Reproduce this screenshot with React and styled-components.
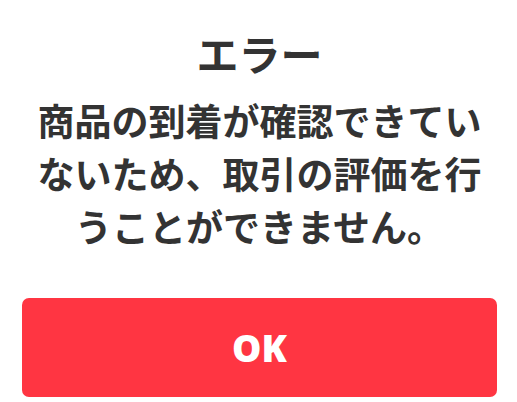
import React from 'react';
import styled, { createGlobalStyle } from 'styled-components';

const GlobalStyle = createGlobalStyle`
  html, body {
    margin: 0;
    padding: 0;
    background: #fff;
  }
  body {
    font-family: "Noto Sans CJK JP", "Noto Sans", sans-serif;
    color: #333;
  }
`;

const Dialog = styled.div`
  width: 517px;
  height: 402px;
  box-sizing: border-box;
  padding: 27px 20px 0 22px;
  display: flex;
  flex-direction: column;
  align-items: stretch;
`;

const Title = styled.h2`
  margin: 0;
  text-align: center;
  font-size: 42px;
  line-height: 52px;
  font-weight: 700;
  color: #333;
`;

const Message = styled.p`
  margin: 15px 0 0;
  text-align: center;
  font-size: 37px;
  line-height: 53px;
  font-weight: 700;
  color: #333;
`;

const OkButton = styled.button`
  margin-top: 45px;
  height: 99px;
  border: none;
  border-radius: 7px;
  background: #ff3542;
  color: #fff;
  font-family: "Noto Sans", "Noto Sans CJK JP", sans-serif;
  font-size: 37px;
  font-weight: 900;
  cursor: pointer;
`;

const App = () => {
    return (
        <>
            <GlobalStyle />
            <Dialog>
                <Title>エラー</Title>
                <Message>
                    商品の到着が確認できてい<br />
                    ないため、取引の評価を行<br />
                    うことができません。
                </Message>
                <OkButton>OK</OkButton>
            </Dialog>
        </>
    );
};

export default App;
